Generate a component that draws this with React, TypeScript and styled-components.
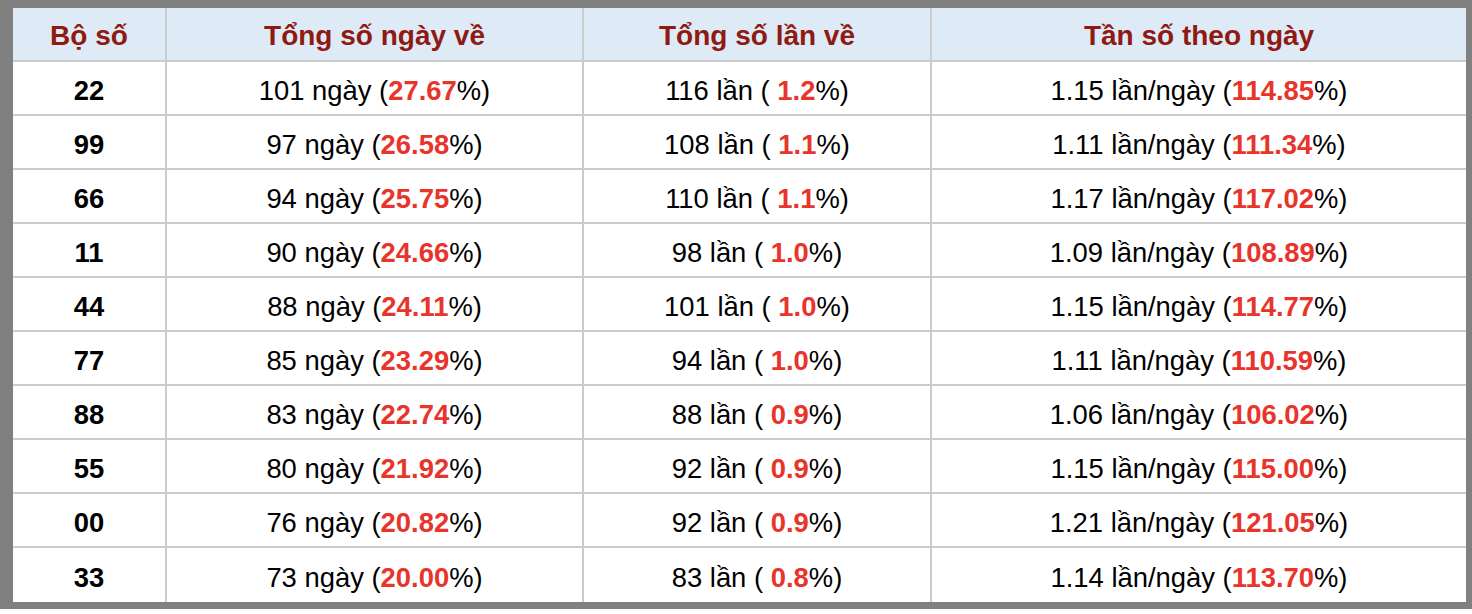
import { Fragment, ReactElement } from "react";
import styled, { createGlobalStyle } from "styled-components";

const GlobalStyle = createGlobalStyle`
  html, body {
    margin: 0;
    padding: 0;
    background: #ffffff;
  }
  body {
    font-family: "Liberation Sans", Arial, sans-serif;
  }
`;

type Row = {
  num: string;
  days: string;
  dayPct: string;
  times: string;
  timePct: string;
  rate: string;
  ratePct: string;
};

const rows: Row[] = [
  { num: "22", days: "101", dayPct: "27.67", times: "116", timePct: "1.2", rate: "1.15", ratePct: "114.85" },
  { num: "99", days: "97", dayPct: "26.58", times: "108", timePct: "1.1", rate: "1.11", ratePct: "111.34" },
  { num: "66", days: "94", dayPct: "25.75", times: "110", timePct: "1.1", rate: "1.17", ratePct: "117.02" },
  { num: "11", days: "90", dayPct: "24.66", times: "98", timePct: "1.0", rate: "1.09", ratePct: "108.89" },
  { num: "44", days: "88", dayPct: "24.11", times: "101", timePct: "1.0", rate: "1.15", ratePct: "114.77" },
  { num: "77", days: "85", dayPct: "23.29", times: "94", timePct: "1.0", rate: "1.11", ratePct: "110.59" },
  { num: "88", days: "83", dayPct: "22.74", times: "88", timePct: "0.9", rate: "1.06", ratePct: "106.02" },
  { num: "55", days: "80", dayPct: "21.92", times: "92", timePct: "0.9", rate: "1.15", ratePct: "115.00" },
  { num: "00", days: "76", dayPct: "20.82", times: "92", timePct: "0.9", rate: "1.21", ratePct: "121.05" },
  { num: "33", days: "73", dayPct: "20.00", times: "83", timePct: "0.8", rate: "1.14", ratePct: "113.70" },
];

const Frame = styled.div`
  width: 1472px;
  box-sizing: border-box;
  border-style: solid;
  border-color: #808080;
  border-width: 8px 6px 7px 13px;
`;

const Grid = styled.div`
  display: grid;
  grid-template-columns: 152px 415px 346px 534px;
  grid-auto-rows: 54px;
  column-gap: 2px;
  background: #cccccc;
`;

const Cell = styled.div<{ $head?: boolean; $bold?: boolean; $last?: boolean }>`
  display: flex;
  align-items: center;
  justify-content: center;
  box-sizing: border-box;
  padding-top: ${({ $head }) => ($head ? "3px" : "5px")};
  border-bottom: ${({ $last }) => ($last ? "none" : "2px solid #cccccc")};
  background: ${({ $head }) => ($head ? "#deeaf6" : "#ffffff")};
  color: ${({ $head }) => ($head ? "#8e1a12" : "#000000")};
  font-weight: ${({ $head, $bold }) => ($head || $bold ? "bold" : "normal")};
  font-size: ${({ $head }) => ($head ? "28px" : "27.4px")};
  white-space: pre;
`;

const Pct = styled.span`
  color: #e8342a;
  font-weight: bold;
`;

export default function App(): ReactElement {
  return (
    <>
      <GlobalStyle />
      <Frame>
        <Grid>
          <Cell $head>Bộ số</Cell>
          <Cell $head>Tổng số ngày về</Cell>
          <Cell $head>Tổng số lần về</Cell>
          <Cell $head>Tần số theo ngày</Cell>
          {rows.map((r, i) => {
            const last = i === rows.length - 1;
            return (
              <Fragment key={r.num}>
                <Cell $bold $last={last}>
                  {r.num}
                </Cell>
                <Cell $last={last}>
                  {r.days} ngày (<Pct>{r.dayPct}</Pct>%)
                </Cell>
                <Cell $last={last}>
                  {r.times} lần ( <Pct>{r.timePct}</Pct>%)
                </Cell>
                <Cell $last={last}>
                  {r.rate} lần/ngày (<Pct>{r.ratePct}</Pct>%)
                </Cell>
              </Fragment>
            );
          })}
        </Grid>
      </Frame>
    </>
  );
}
